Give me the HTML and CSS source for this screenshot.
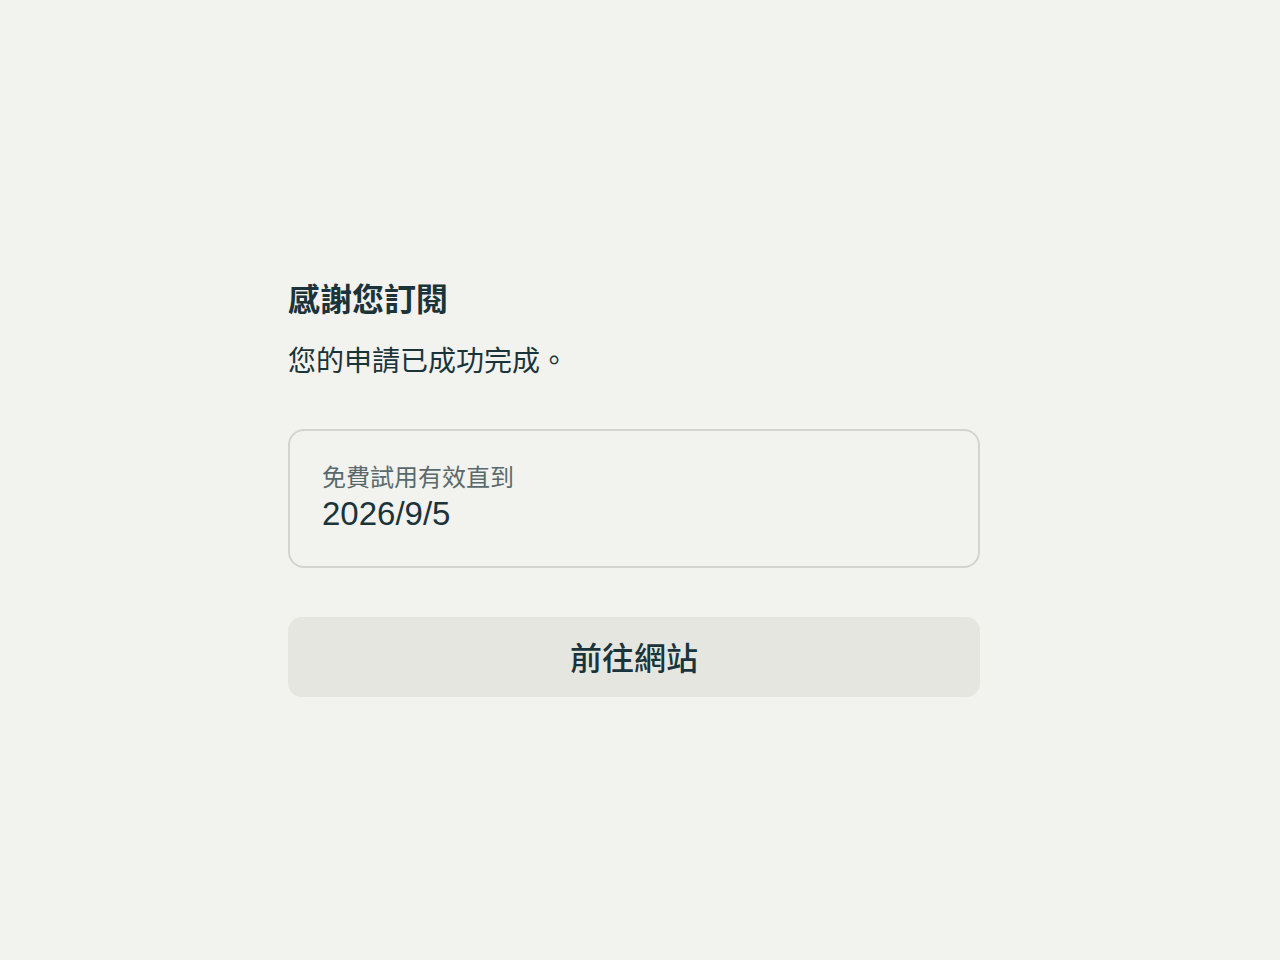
FILE: index.html
```html
<!DOCTYPE html>
<html lang="zh-Hant">
<head>
<meta charset="utf-8">
<title>感謝您訂閱</title>
<link rel="stylesheet" href="styles.css">
</head>
<body>
<main class="page">
  <section class="panel">
    <h1 class="title">感謝您訂閱</h1>
    <p class="subtitle">您的申請已成功完成。</p>
    <div class="card">
      <div class="card-label">免費試用有效直到</div>
      <div class="card-value">2026/9/5</div>
    </div>
    <button class="cta" type="button">前往網站</button>
  </section>
</main>
</body>
</html>
```

FILE: styles.css
```css
html, body {
  margin: 0;
  padding: 0;
  background: #f2f2ee;
}
body {
  font-family: "Liberation Sans", "Noto Sans CJK TC", sans-serif;
  color: #1a343a;
}
.page {
  min-height: 960px;
  padding-top: 280px;
  box-sizing: border-box;
}
.panel {
  width: 692px;
  margin: 0 0 0 288px;
  display: flex;
  flex-direction: column;
}
.title {
  margin: 0;
  font-size: 32px;
  line-height: 40px;
  font-weight: 700;
}
.subtitle {
  margin: 22px 0 0;
  font-size: 28px;
  line-height: 40px;
  font-weight: 400;
}
.card {
  margin-top: 47px;
  border: 2px solid #d3d4d0;
  border-radius: 16px;
  padding: 31px 32px 34px;
  display: flex;
  flex-direction: column;
  gap: 2px;
}
.card-label {
  font-size: 24px;
  line-height: 32px;
  color: #5a6a6c;
}
.card-value {
  font-size: 33px;
  line-height: 36px;
  color: #1a343a;
}
.cta {
  margin-top: 49px;
  height: 80px;
  padding: 0 0 3px;
  border: none;
  border-radius: 14px;
  background: #e6e6e1;
  font-family: "Liberation Sans", "Noto Sans CJK TC", sans-serif;
  font-size: 32px;
  font-weight: 500;
  color: #1a343a;
  cursor: pointer;
}
```
